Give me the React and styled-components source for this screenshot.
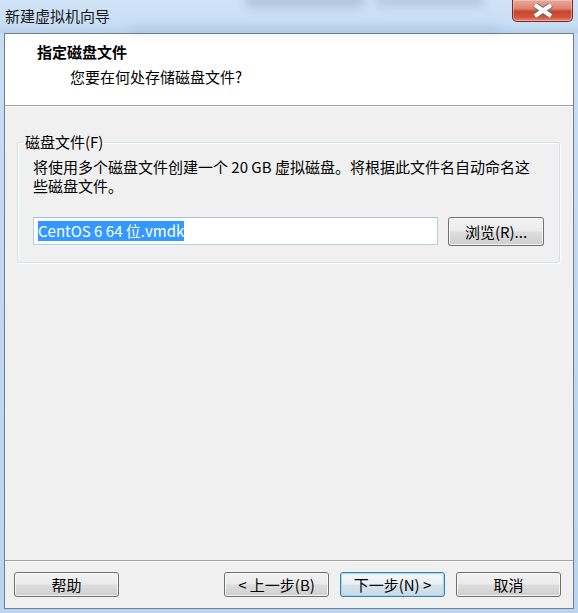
import React from "react";
import styled, { createGlobalStyle } from "styled-components";

const GlobalStyle = createGlobalStyle`
  html, body {
    margin: 0;
    padding: 0;
    background: #c6dbf3;
  }
  * {
    box-sizing: border-box;
  }
`;

const FONT = `"Noto Sans CJK SC", "Noto Sans", sans-serif`;

const Window = styled.div`
  width: 578px;
  height: 613px;
  display: flex;
  flex-direction: column;
  padding: 0 4px 4px 4px;
  background: linear-gradient(180deg, #c9def5 0%, #c3d9f2 40%, #bcd4ef 100%);
  font-family: ${FONT};
  font-size: 15px;
  color: #000;
  overflow: hidden;
`;

const TitleBar = styled.div`
  height: 33px;
  display: flex;
  align-items: flex-start;
  justify-content: space-between;
  position: relative;
  background: linear-gradient(180deg, rgba(255,255,255,0.15) 0%, rgba(255,255,255,0) 70%, rgba(120,150,190,0.18) 100%);
  margin: 0 -4px;
  padding: 0 4px;
`;

// the blurred desktop that shows through the glass title bar
const GlassGhost = styled.div`
  position: absolute;
  left: ${(p) => p.$left}px;
  top: ${(p) => p.$top}px;
  width: ${(p) => p.$width}px;
  height: ${(p) => p.$height}px;
  border-radius: 6px;
  background: rgba(70, 95, 130, ${(p) => p.$alpha});
  filter: blur(5px);
  pointer-events: none;
`;

const Title = styled.div`
  padding: 6px 0 0 1px;
  line-height: 20px;
  color: #1a1a1a;
  position: relative;
`;

const CloseButton = styled.div`
  width: 61px;
  height: 22px;
  margin-right: 1px;
  border: 1px solid #6f2f25;
  border-top: none;
  border-radius: 0 0 5px 5px;
  background: linear-gradient(180deg, #e9a899 0%, #dc8673 40%, #c8442d 55%, #d1533b 80%, #e6886b 100%);
  box-shadow: inset 0 0 0 1px rgba(255, 220, 210, 0.45);
  display: flex;
  align-items: center;
  justify-content: center;
  position: relative;
`;

const Client = styled.div`
  flex: 1;
  display: flex;
  flex-direction: column;
  border: 1px solid #6f7f92;
  background: #f0f0f0;
`;

const Header = styled.div`
  height: 72px;
  background: #fff;
  border-bottom: 1px solid #a0a0a0;
  box-shadow: 0 1px 0 #fff;
  padding: 8px 0 0 32px;
`;

const HeaderTitle = styled.div`
  font-weight: bold;
  line-height: 20px;
`;

const HeaderSub = styled.div`
  line-height: 20px;
  margin-top: 5px;
  padding-left: 33px;
`;

const Body = styled.div`
  flex: 1;
  padding: 26px 13px 0 12px;
`;

const GroupBox = styled.fieldset`
  margin: 0;
  padding: 0 15px 16px 15px;
  border: 1px solid #d5dfe5;
  border-radius: 3px;
  box-shadow: inset 1px 1px 0 #fff, 1px 1px 0 #fff;
`;

const Legend = styled.legend`
  margin-left: -10px;
  padding: 0 2px;
  line-height: 20px;
`;

const Description = styled.p`
  margin: 5px 0 0 0;
  line-height: 19px;
`;

const FileRow = styled.div`
  display: flex;
  align-items: flex-start;
  gap: 10px;
  margin-top: 22px;
`;

const TextBox = styled.div`
  flex: 1;
  height: 28px;
  border: 1px solid #b5cfe7;
  border-top-color: #a3c1de;
  background: #fff;
  padding: 3px 4px;
  display: flex;
  align-items: center;
`;

const Selected = styled.span`
  background: #3399ff;
  color: #fff;
  line-height: 20px;
  white-space: pre;
`;

const Button = styled.div`
  width: ${(p) => p.$width || 105}px;
  height: ${(p) => p.$height || 25}px;
  border: 1px solid ${(p) => (p.$default ? "#3c7fb1" : "#707070")};
  border-radius: 3px;
  background: ${(p) =>
    p.$default
      ? "linear-gradient(180deg, #f2f7fa 0%, #e8f0f5 48%, #d6e3ec 52%, #cad9e4 100%)"
      : "linear-gradient(180deg, #f2f2f2 0%, #ebebeb 48%, #dddddd 52%, #cfcfcf 100%)"};
  box-shadow: ${(p) =>
    p.$default
      ? "inset 0 0 0 1px #9fd7f3"
      : "inset 0 0 0 1px rgba(255,255,255,0.75)"};
  display: flex;
  align-items: center;
  justify-content: center;
  line-height: 20px;
  white-space: nowrap;
  color: #000;
`;

const Footer = styled.div`
  height: 48px;
  border-top: 1px solid #a0a0a0;
  box-shadow: inset 0 1px 0 #fff;
  display: flex;
  align-items: center;
  gap: 11px;
  padding: 0 12px 0 9px;
`;

const Spacer = styled.div`
  flex: 1;
`;

function CloseGlyph() {
  return (
    <svg width="22" height="15" viewBox="0 0 22 15">
      <path d="M3 2 L19 13 M19 2 L3 13" stroke="#6a6a6a" strokeWidth="6" strokeLinecap="butt" />
      <path d="M3 2 L19 13 M19 2 L3 13" stroke="#ffffff" strokeWidth="4" strokeLinecap="butt" />
    </svg>
  );
}

export default function App() {
  return (
    <>
      <GlobalStyle />
      <Window>
        <TitleBar>
          <GlassGhost $left={245} $top={-8} $width={120} $height={16} $alpha={0.22} />
          <GlassGhost $left={375} $top={-8} $width={110} $height={15} $alpha={0.18} />
          <GlassGhost $left={130} $top={26} $width={370} $height={10} $alpha={0.08} />
          <Title>新建虚拟机向导</Title>
          <CloseButton>
            <CloseGlyph />
          </CloseButton>
        </TitleBar>
        <Client>
          <Header>
            <HeaderTitle>指定磁盘文件</HeaderTitle>
            <HeaderSub>您要在何处存储磁盘文件?</HeaderSub>
          </Header>
          <Body>
            <GroupBox>
              <Legend>磁盘文件(F)</Legend>
              <Description>
                将使用多个磁盘文件创建一个 20 GB 虚拟磁盘。将根据此文件名自动命名这些磁盘文件。
              </Description>
              <FileRow>
                <TextBox>
                  <Selected>CentOS 6 64 位.vmdk</Selected>
                </TextBox>
                <Button $width={96} $height={29}>浏览(R)...</Button>
              </FileRow>
            </GroupBox>
          </Body>
          <Footer>
            <Button>帮助</Button>
            <Spacer />
            <Button>&lt; 上一步(B)</Button>
            <Button $default>下一步(N) &gt;</Button>
            <Button>取消</Button>
          </Footer>
        </Client>
      </Window>
    </>
  );
}
